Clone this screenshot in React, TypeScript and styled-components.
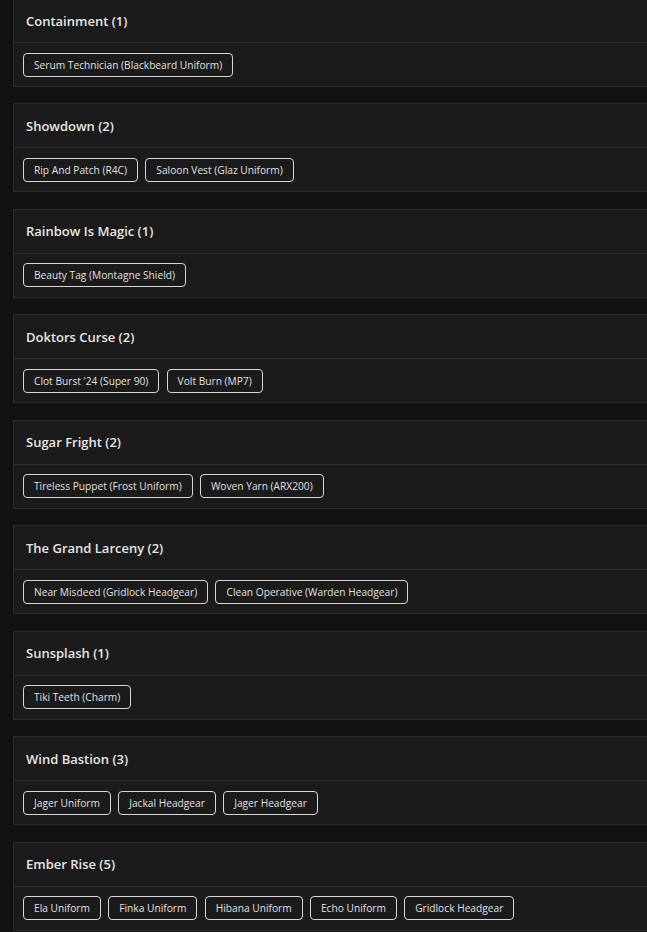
import React from "react";
import styled, { createGlobalStyle } from "styled-components";

const GlobalStyle = createGlobalStyle`
  html, body {
    margin: 0;
    padding: 0;
    background: #121212;
    overflow: hidden;
  }
  body {
    font-family: "Open Sans", "Liberation Sans", sans-serif;
  }
`;

const Page = styled.div`
  display: flex;
  flex-direction: column;
  gap: 16.45px;
  padding-left: 13px;
  margin-top: -2px;
  width: 700px;
`;

const Card = styled.section`
  box-sizing: border-box;
  display: flex;
  flex-direction: column;
  background: #1b1b1b;
  border: 1px solid #2a2a2a;
`;

const CardHeader = styled.div`
  box-sizing: border-box;
  height: 44px;
  display: flex;
  align-items: center;
  padding: 0 12px;
  border-bottom: 1px solid #2c2c2c;
`;

const Title = styled.h3`
  margin: 0;
  font-size: 13px;
  font-weight: 600;
  color: #e6e6e6;
`;

const TagRow = styled.div`
  box-sizing: border-box;
  height: 43px;
  display: flex;
  align-items: center;
  gap: 7.3px;
  padding: 0 9px;
`;

const Tag = styled.span`
  box-sizing: border-box;
  height: 24px;
  display: inline-flex;
  align-items: center;
  padding: 0 10px;
  border: 1px solid #d8d8d8;
  border-radius: 4px;
  font-size: 10.2px;
  color: #e0e0e0;
  white-space: nowrap;
`;

const groups: { name: string; items: string[] }[] = [
  { name: "Containment", items: ["Serum Technician (Blackbeard Uniform)"] },
  { name: "Showdown", items: ["Rip And Patch (R4C)", "Saloon Vest (Glaz Uniform)"] },
  { name: "Rainbow Is Magic", items: ["Beauty Tag (Montagne Shield)"] },
  { name: "Doktors Curse", items: ["Clot Burst '24 (Super 90)", "Volt Burn (MP7)"] },
  { name: "Sugar Fright", items: ["Tireless Puppet (Frost Uniform)", "Woven Yarn (ARX200)"] },
  {
    name: "The Grand Larceny",
    items: ["Near Misdeed (Gridlock Headgear)", "Clean Operative (Warden Headgear)"],
  },
  { name: "Sunsplash", items: ["Tiki Teeth (Charm)"] },
  { name: "Wind Bastion", items: ["Jager Uniform", "Jackal Headgear", "Jager Headgear"] },
  {
    name: "Ember Rise",
    items: ["Ela Uniform", "Finka Uniform", "Hibana Uniform", "Echo Uniform", "Gridlock Headgear"],
  },
];

export default function App() {
  return (
    <>
      <GlobalStyle />
      <Page>
        {groups.map((g) => (
          <Card key={g.name}>
            <CardHeader>
              <Title>
                {g.name} ({g.items.length})
              </Title>
            </CardHeader>
            <TagRow>
              {g.items.map((it) => (
                <Tag key={it}>{it}</Tag>
              ))}
            </TagRow>
          </Card>
        ))}
      </Page>
    </>
  );
}
